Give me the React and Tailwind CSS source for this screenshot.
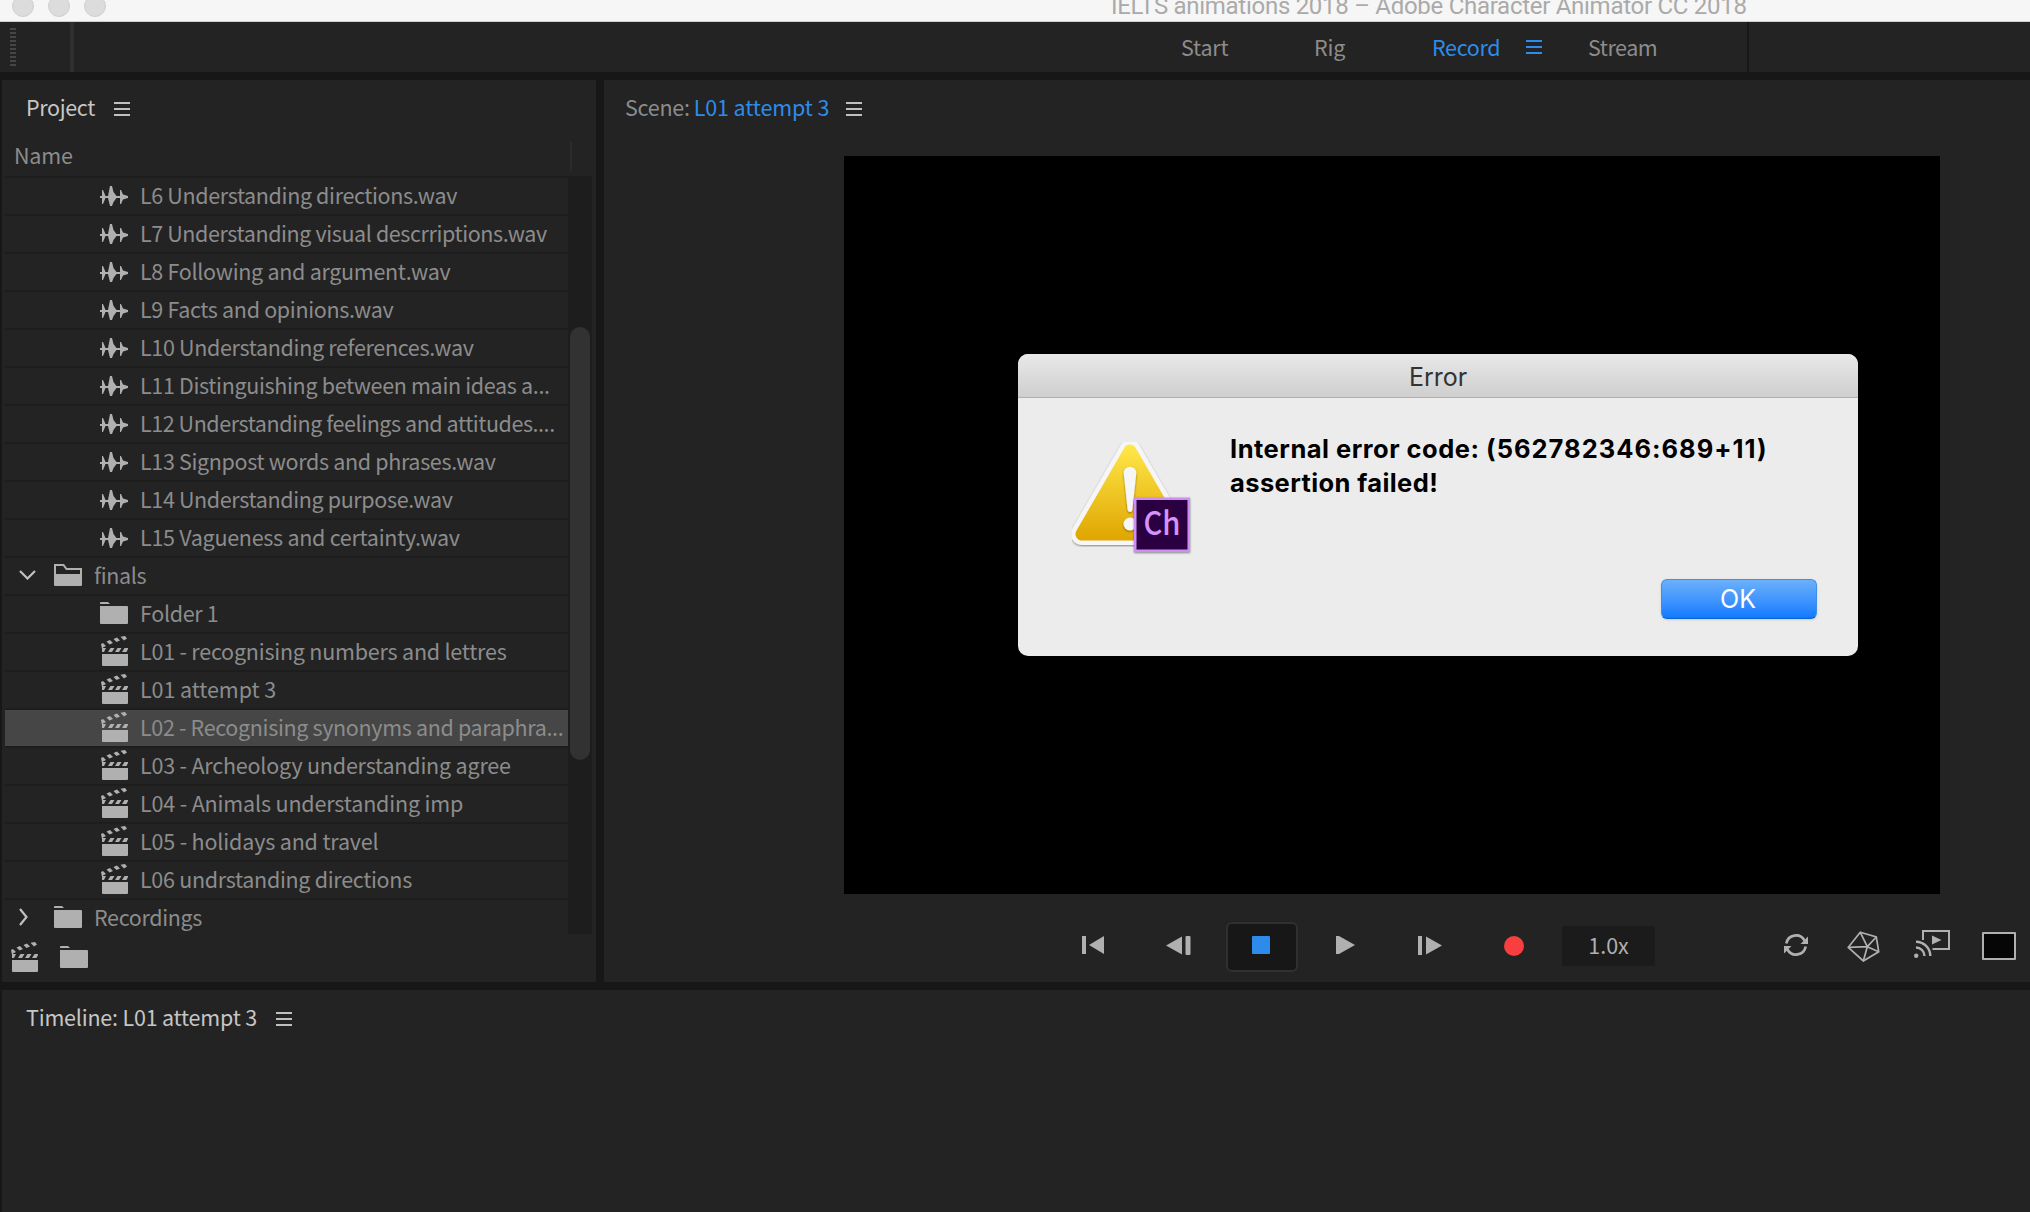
const UI = "font-['Noto_Sans_CJK_JP',sans-serif]";
const MAC = "font-['Inter',sans-serif]";

const wavs = [
  ["L6 Understanding directions.wav", "tracking-[-0.36px]"],
  ["L7 Understanding visual descrriptions.wav", "tracking-[-0.4px]"],
  ["L8 Following and argument.wav", "tracking-[-0.3px]"],
  ["L9 Facts and opinions.wav", "tracking-[-0.33px]"],
  ["L10 Understanding references.wav", "tracking-[-0.33px]"],
  ["L11 Distinguishing between main ideas a...", "tracking-[-0.33px]"],
  ["L12 Understanding feelings and attitudes....", "tracking-[-0.44px]"],
  ["L13 Signpost words and phrases.wav", "tracking-[-0.34px]"],
  ["L14 Understanding purpose.wav", "tracking-[-0.36px]"],
  ["L15 Vagueness and certainty.wav", "tracking-[-0.28px]"],
];

const scenes = [
  ["L01 - recognising numbers and lettres", "tracking-[-0.22px]"],
  ["L01 attempt 3", "tracking-[-0.08px]"],
  ["L02 - Recognising synonyms and paraphra...", "tracking-[-0.34px]"],
  ["L03 - Archeology understanding agree", "tracking-[-0.2px]"],
  ["L04 - Animals understanding imp", "tracking-[-0.16px]"],
  ["L05 - holidays and travel", "tracking-[-0.17px]"],
  ["L06 undrstanding directions", "tracking-[-0.3px]"],
];

function MenuIcon({ className = "" }) {
  return (
    <svg width="16" height="14" viewBox="0 0 16 14" fill="currentColor" className={className}>
      <path d="M0 0h16v2H0zM0 6h16v2H0zM0 12h16v2H0z" />
    </svg>
  );
}

function WaveIcon() {
  return (
    <svg width="28" height="20" viewBox="0 0 28 20" fill="#b0b0b0">
      <path d="M0 10h2V4h1l2.500 6H8L10 0h2l1.500 6 3 4H20V4h1l2 4.500 5 1.500v2l-5 1.500-2 4.500h-1v-6h-3.500l-3 4L12 20h-2L8 12H5.500L3 18H2v-6H0z" />
    </svg>
  );
}

function FolderIcon() {
  return (
    <svg width="28" height="22" viewBox="0 0 28 22" fill="#b0b0b0" className="mb-0.5">
      <path d="M0 2V1q0-1 1-1h7l2 2zM0 4h27q1 0 1 1v16q0 1-1 1H1q-1 0-1-1z" />
    </svg>
  );
}

function FolderOpenIcon() {
  return (
    <svg width="28" height="22" viewBox="0 0 28 22" fill="none" className="mb-0.5">
      <path d="M1 11V1h8.500l3 4H27v6" stroke="#b0b0b0" strokeWidth="2" />
      <path d="M0 10h28v11q0 1-1 1H1q-1 0-1-1z" fill="#b0b0b0" />
    </svg>
  );
}

function ClapperIcon() {
  return (
    <svg width="28" height="30" viewBox="0 0 28 30" fill="#b0b0b0" className="mb-0.5">
      <path d="M2 18h26v11q0 1-1 1H3q-1 0-1-1z" />
      <path d="M2 12h4l-2 4H2zM10.500 12h4L12 16H8zM17.500 12h4L19 16h-4zM24.500 12H28v1l-1.500 3H22z" />
      <path d="M1 8l2-1 3 3-3 1.500V13H2zM6.500 5.500L10 4l3 3-3.500 1.500zM13.500 3L17 1.500l3 3L16.500 6zM20.500.8L25 0l2 2.500-3 2z" />
    </svg>
  );
}

function Row({ icon, label, tracking = "tracking-[-0.34px]", selected, level = 2, chevron }) {
  return (
    <div className="h-[38px] border-t-2 border-[#1d1d1d]">
      <div className={`flex h-9 items-center ${selected ? "bg-[#464646]" : ""}`}>
        <div className={`shrink-0 pl-3.5 ${level === 2 ? "w-[95px]" : "w-[49px]"}`}>{chevron}</div>
        <div className="w-10 shrink-0">{icon}</div>
        <span className={`pb-0.5 text-[21.5px] leading-9 whitespace-nowrap text-[#8c8c8c] ${tracking}`}>{label}</span>
      </div>
    </div>
  );
}

function ProjectPanel() {
  return (
    <section className="flex w-[594px] shrink-0 flex-col bg-[#232323]">
      <div className="flex h-[58px] shrink-0 items-center pl-6 text-[21.5px] tracking-[-0.35px] text-[#c6c6c6]">
        <span className="w-[88px] pb-[3px]">Project</span>
        <MenuIcon className="text-[#c0c0c0]" />
      </div>
      <div className="flex h-[38px] shrink-0 justify-between pr-6 pl-3">
        <span className="text-[21.5px] leading-[33px] tracking-[-0.2px] text-[#8c8c8c]">Name</span>
        <div className="mt-1 h-[29px] w-0.5 bg-[#2b2b2b]" />
      </div>
      <div className="flex h-[758px] shrink-0 pl-[3px]">
        <div className="w-[563px]">
          {wavs.map(([label, tracking]) => (
            <Row key={label} icon={<WaveIcon />} label={label} tracking={tracking} />
          ))}
          <Row
            level={1}
            label="finals"
            icon={<FolderOpenIcon />}
            chevron={
              <svg width="17" height="10" viewBox="0 0 17 10" fill="none" stroke="#c0c0c0" strokeWidth="2.2" className="mb-0.5">
                <path d="M1 1l7.500 7.500L16 1" />
              </svg>
            }
          />
          <Row icon={<FolderIcon />} label="Folder 1" />
          {scenes.map(([label, tracking], i) => (
            <Row key={label} icon={<ClapperIcon />} label={label} tracking={tracking} selected={i === 2} />
          ))}
          <Row
            level={1}
            label="Recordings"
            icon={<FolderIcon />}
            chevron={
              <svg width="10" height="18" viewBox="0 0 10 18" fill="none" stroke="#c0c0c0" strokeWidth="2.2" className="mb-0.5">
                <path d="M1 1l6.500 8L1 17" />
              </svg>
            }
          />
        </div>
        <div className="w-6 bg-[#1d1d1d] pt-[151px] pl-0.5">
          <div className="h-[433px] w-5 rounded-full bg-[#323232]" />
        </div>
      </div>
      <div className="flex gap-[22px] pt-2 pl-2">
        <ClapperIcon />
        <div className="pt-1">
          <FolderIcon />
        </div>
      </div>
    </section>
  );
}

function WarningIcon() {
  return (
    <svg width="126" height="126" viewBox="0 0 126 126" className="shrink-0">
      <defs>
        <linearGradient id="warn" gradientUnits="userSpaceOnUse" x1="0" y1="12" x2="0" y2="108">
          <stop offset="0" stopColor="#ffe84a" />
          <stop offset="1" stopColor="#dfa500" />
        </linearGradient>
        <filter id="drop" x="-10%" y="-10%" width="120%" height="125%">
          <feDropShadow dx="0" dy="1" stdDeviation="1" floodOpacity=".45" />
        </filter>
      </defs>
      <g strokeLinejoin="round">
        <path d="M62 18L14 101h96z" fill="#f6f6f6" stroke="#f6f6f6" strokeWidth="22" filter="url(#drop)" />
        <path d="M62 18L14 101h96z" fill="url(#warn)" stroke="url(#warn)" strokeWidth="13" />
      </g>
      <g fill="#f6f6f6" filter="url(#drop)">
        <path d="M55.700 40a6.300 6.300 0 0 1 12.600 0L64.500 76q-.5 3-2.500 3t-2.500-3z" />
        <circle cx="62" cy="91" r="6.500" />
      </g>
      <rect x="67.250" y="65.750" width="53.500" height="52" fill="#2a003f" stroke="#cf8df5" strokeWidth="2.500" filter="url(#drop)" />
      <text
        x="75.500"
        y="102"
        fill="#d492ff"
        fontSize="33"
        fontWeight="500"
        textLength="37"
        lengthAdjust="spacingAndGlyphs"
        className={UI}
      >
        Ch
      </text>
    </svg>
  );
}

function ErrorDialog() {
  return (
    <div className={`absolute top-[198px] left-[174px] flex h-[302px] w-[840px] flex-col overflow-hidden rounded-[10px] bg-[#ececec] ${MAC}`}>
      <div className="h-11 shrink-0 border-b border-[#b0b0b0] bg-gradient-to-b from-[#e8e8e8] to-[#cfcfcf] text-center text-[25px] leading-[47px] text-[#333]">
        Error
      </div>
      <div className="flex h-[181px] shrink-0 gap-9 pt-[35px] pl-[50px]">
        <WarningIcon />
        <p className="-mt-px text-[25.5px] leading-[34px] font-bold tracking-[0.5px] whitespace-nowrap text-black">
          Internal error code: <span className="tracking-[1px]">(562782346:689+11)</span>
          <br />
          <span className="tracking-[0.4px]">assertion failed!</span>
        </p>
      </div>
      <button className="mr-[41px] h-10 w-[156px] self-end rounded-md border border-[#3d8fe8] border-b-[#0a62d0] bg-gradient-to-b from-[#6bb0fa] to-[#0a7aff] pr-0.5 text-[25px] leading-[39px] text-white shadow-sm">
        OK
      </button>
    </div>
  );
}

function Transport() {
  return (
    <div className="mt-7 flex h-[50px] items-center pl-[478px] text-[#b0b0b0]">
      <svg width="22" height="18" viewBox="0 0 22 18" fill="currentColor" className="mb-1">
        <path d="M0 0h4v18H0zM22 0v18L7 9z" />
      </svg>
      <svg width="25" height="19" viewBox="0 0 25 19" fill="currentColor" className="mb-[3px] ml-[62px]">
        <path d="M16 .5v18L0 9.500z" />
        <rect x="19.500" width="5" height="19" rx="1" />
      </svg>
      <div className="ml-[35px] flex h-[50px] w-[72px] items-center justify-center rounded-md border-2 border-[#303030] bg-[#171717] pr-0.5 pb-1">
        <div className="size-[18px] rounded-[1px] bg-[#2d8ceb]" />
      </div>
      <svg width="19" height="18" viewBox="0 0 19 18" fill="currentColor" className="mb-1 ml-[38px]">
        <path d="M0 0h3l16 9-16 9H0z" />
      </svg>
      <svg width="24" height="19" viewBox="0 0 24 19" fill="currentColor" className="mb-[3px] ml-[63px]">
        <path d="M0 0h4v19H0zM8 .5v18l16-9z" />
      </svg>
      <div className="mb-0.5 ml-[62px] size-5 rounded-full bg-[#f83e3e]" />
      <div className="mb-0.5 ml-[38px] flex h-10 w-[93px] items-center justify-center rounded-[3px] bg-[#1b1b1b] pb-0.5 text-[21.5px] text-[#b0b0b0]">
        1.0x
      </div>
      <svg width="24" height="22" viewBox="0 0 24 22" fill="none" stroke="currentColor" strokeWidth="2.600" className="mb-1 ml-[129px]">
        <path d="M2.300 9.500A9.800 9.800 0 0 1 20.500 6.500M21.700 12.500A9.800 9.800 0 0 1 3.500 15.500" />
        <path d="M24 2.500V10h-7.500zM0 19.500V12h7.500z" fill="currentColor" stroke="none" />
      </svg>
      <svg width="33" height="31" viewBox="0 0 33 31" fill="none" stroke="currentColor" strokeWidth="1.700" className="mb-[1px] ml-[39px]">
        <path d="M13.300 1.300l16 4.700 2.400 14.700-15.400 9.300-15-13.700z" />
        <path d="M20.300 15.700L13.300 1.300M20.300 15.700L29.300 6M20.300 15.700l11.400 5M20.300 15.700l-4 14.300M20.300 15.700l-19 .6" />
      </svg>
      <svg width="36" height="28" viewBox="0 0 36 28" fill="none" stroke="currentColor" strokeWidth="2" className="mb-1.5 ml-[34px]">
        <path d="M9 10V1h26v18H18.500" />
        <path d="M2 17.500a8.500 8.500 0 0 1 8.500 8.500M2 11.700a14.300 14.300 0 0 1 14.300 14.300" strokeWidth="2.400" />
        <path d="M18 5.500l9.500 4.500-9.500 4.500z" fill="currentColor" stroke="none" />
        <circle cx="2.200" cy="25.800" r="2.200" fill="currentColor" stroke="none" />
      </svg>
      <div className="mb-0.5 ml-8 h-7 w-[34px] rounded-[1px] border-2 border-[#b0b0b0] bg-[#060606]" />
    </div>
  );
}

function ScenePanel() {
  return (
    <section className="flex flex-1 flex-col bg-[#232323]">
      <div className="flex h-[58px] shrink-0 items-center pl-[21px] text-[21.5px] text-[#8c8c8c]">
        <div className="w-[221px] pb-[3px]">
          <span className="tracking-[-0.25px]">Scene:</span>
          <span className="ml-1 tracking-[-0.12px] text-[#2d8ceb]">L01 attempt 3</span>
        </div>
        <MenuIcon className="text-[#c0c0c0]" />
      </div>
      <div className="relative mt-[18px] ml-[240px] h-[738px] w-[1096px] shrink-0 bg-black">
        <ErrorDialog />
      </div>
      <Transport />
    </section>
  );
}

function TitleBar() {
  return (
    <header className="relative h-[22px] shrink-0 border-b border-[#cfcfcf] bg-[#f6f6f6]">
      <div className="-mt-[5px] flex gap-[14px] pl-3">
        <i className="size-[22px] rounded-full border border-[#d0d0d0] bg-[#dcdcdc]" />
        <i className="size-[22px] rounded-full border border-[#d0d0d0] bg-[#dcdcdc]" />
        <i className="size-[22px] rounded-full border border-[#d0d0d0] bg-[#dcdcdc]" />
      </div>
      <span className="absolute top-[-11px] left-[1111px] font-['Roboto',sans-serif] text-[24px] leading-[34px] tracking-[-0.28px] whitespace-nowrap text-[#aaa]">
        IELTS animations 2018 – Adobe Character Animator CC 2018
      </span>
    </header>
  );
}

function Workspaces() {
  return (
    <nav className="flex h-[50px] shrink-0 items-center bg-[#232323] pl-2.5 text-[21.5px] tracking-[-0.2px] text-[#8c8c8c]">
      <div className="flex w-[60px] flex-col gap-0.5">
        {Array.from({ length: 10 }, (_, i) => (
          <div key={i} className="h-0.5 w-1.5 bg-[#464646]" />
        ))}
      </div>
      <div className="h-full w-1 bg-[#2f2f2f]" />
      <span className="ml-[1107px] w-[133px]">Start</span>
      <span className="w-[118px]">Rig</span>
      <span className="w-[94px] tracking-[-0.35px] text-[#2d8ceb]">Record</span>
      <MenuIcon className="text-[#2d8ceb]" />
      <span className="ml-[46px] w-[159px] tracking-[-0.45px]">Stream</span>
      <div className="h-full w-0.5 bg-[#171717]" />
    </nav>
  );
}

export default function App() {
  return (
    <div className={`flex h-[1212px] w-[2030px] flex-col overflow-hidden bg-[#171717] ${UI}`}>
      <TitleBar />
      <Workspaces />
      <main className="mt-2 flex h-[902px] shrink-0 gap-2 pl-0.5">
        <ProjectPanel />
        <ScenePanel />
      </main>
      <section className="mt-2 ml-0.5 flex-1 bg-[#232323] pt-3 pl-6">
        <div className="flex h-[34px] items-center text-[21.5px] tracking-[-0.2px] text-[#c6c6c6]">
          <span className="w-[250px] pb-[3px]">Timeline: L01 attempt 3</span>
          <MenuIcon className="text-[#c0c0c0]" />
        </div>
      </section>
    </div>
  );
}
